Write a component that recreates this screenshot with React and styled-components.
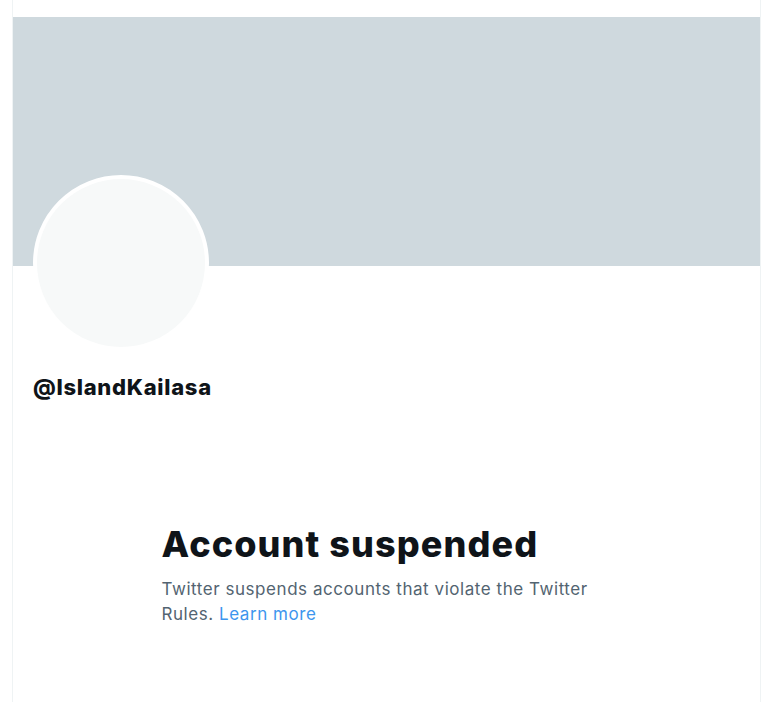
import React from 'react'
import styled, { createGlobalStyle } from 'styled-components'

const GlobalStyle = createGlobalStyle`
  html, body {
    margin: 0;
    padding: 0;
    background: #ffffff;
  }
  body {
    font-family: Inter, "Noto Sans", "Liberation Sans", sans-serif;
    -webkit-font-smoothing: antialiased;
  }
`

const Page = styled.div`
  width: 777px;
  height: 702px;
  overflow: hidden;
  background: #fff;
`

const Column = styled.main`
  margin-left: 12px;
  width: 747px;
  min-height: 702px;
  padding-top: 17px;
  border-left: 1px solid #eff3f4;
  border-right: 1px solid #eff3f4;
`

const Banner = styled.div`
  height: 249px;
  background: #cfd9de;
`

const ProfileHead = styled.div`
  padding: 0 20px;
`

const Avatar = styled.div`
  width: 168px;
  height: 168px;
  margin-top: -91px;
  border-radius: 50%;
  border: 4px solid #fff;
  background: #f7f9f9;
`

const Handle = styled.h2`
  margin: 23px 0 0;
  font-size: 22px;
  line-height: 26px;
  font-weight: 800;
  color: #0f1419;
  letter-spacing: 0.7px;
`

const Empty = styled.section`
  width: 450px;
  margin: 122px auto 0;
`

const Title = styled.h1`
  margin: 0;
  font-size: 36px;
  line-height: 44px;
  font-weight: 800;
  color: #0f1419;
  letter-spacing: 1.1px;
`

const Text = styled.p`
  margin: 11px 0 0;
  font-size: 17px;
  line-height: 25px;
  color: #536471;
  letter-spacing: 0.55px;
`

const Link = styled.a`
  color: #3d96ee;
  text-decoration: none;
`

export default function App() {
  return (
    <Page>
      <GlobalStyle />
      <Column>
        <Banner />
        <ProfileHead>
          <Avatar />
          <Handle>@IslandKailasa</Handle>
        </ProfileHead>
        <Empty>
          <Title>Account suspended</Title>
          <Text>
            Twitter suspends accounts that violate the Twitter Rules.{' '}
            <Link href="#">Learn more</Link>
          </Text>
        </Empty>
      </Column>
    </Page>
  )
}
